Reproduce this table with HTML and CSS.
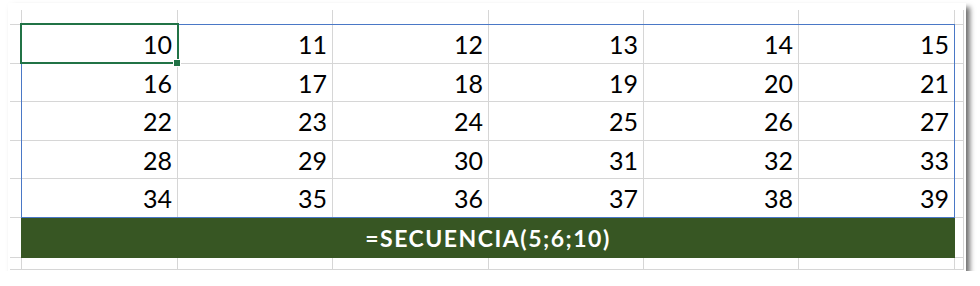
FILE: index.html
```html
<!DOCTYPE html>
<html lang="es">
<head>
<meta charset="utf-8">
<title>SECUENCIA</title>
<link rel="stylesheet" href="styles.css">
</head>
<body>
<div class="card">
  <div class="stack">
    <div class="sheet">
      <div class="c"></div><div class="c"></div><div class="c"></div><div class="c"></div><div class="c"></div><div class="c"></div><div class="c"></div><div class="c"></div>

      <div class="c"></div><div class="c n">10</div><div class="c n">11</div><div class="c n">12</div><div class="c n">13</div><div class="c n">14</div><div class="c n">15</div><div class="c"></div>
      <div class="c"></div><div class="c n">16</div><div class="c n">17</div><div class="c n">18</div><div class="c n">19</div><div class="c n">20</div><div class="c n">21</div><div class="c"></div>
      <div class="c"></div><div class="c n">22</div><div class="c n">23</div><div class="c n">24</div><div class="c n">25</div><div class="c n">26</div><div class="c n">27</div><div class="c"></div>
      <div class="c"></div><div class="c n">28</div><div class="c n">29</div><div class="c n">30</div><div class="c n">31</div><div class="c n">32</div><div class="c n">33</div><div class="c"></div>
      <div class="c"></div><div class="c n">34</div><div class="c n">35</div><div class="c n">36</div><div class="c n">37</div><div class="c n">38</div><div class="c n">39</div><div class="c"></div>

      <div class="c"></div><div class="formula">=SECUENCIA(5;6;10)</div><div class="c"></div>

      <div class="c"></div><div class="c"></div><div class="c"></div><div class="c"></div><div class="c"></div><div class="c"></div><div class="c"></div><div class="c"></div>
    </div>
    <div class="sheet overlay">
      <div class="range"></div>
      <div class="selection"><span class="handle"></span></div>
    </div>
  </div>
</div>
</body>
</html>
```
FILE: styles.css
```css
* { box-sizing: border-box; }

html, body {
  margin: 0;
  padding: 0;
  background: #ffffff;
}

.card {
  margin: 3px 0 0 8px;
  width: 958px;
  height: 268px;
  padding: 7px 0 0 2px;
  background: #ffffff;
  box-shadow: 4px 4px 5px rgba(0, 0, 0, 0.55);
}

.stack {
  display: grid;
}

.sheet {
  grid-area: 1 / 1;
  display: grid;
  grid-template-columns: 12px 156px 155px 156px 155px 155px 156px 9px;
  grid-template-rows: 15px 39px 38px 39px 38px 39px 40px 12px;
  font-family: Lato, "Liberation Sans", sans-serif;
}

.overlay {
  pointer-events: none;
}

.c {
  border-right: 1px solid #d6d6d6;
  border-bottom: 1px solid #d6d6d6;
}

.n {
  text-align: right;
  padding-right: 5px;
  font-size: 25px;
  line-height: 38px;
  color: #000000;
}

.formula {
  grid-column: 2 / 8;
  grid-row: 7;
  margin-left: -1px;
  background: #375623;
  color: #ffffff;
  font-weight: 700;
  font-size: 23px;
  letter-spacing: 1.5px;
  text-align: center;
  line-height: 40px;
}

.range {
  grid-column: 2 / 8;
  grid-row: 2 / 7;
  margin: -1px 0 0 -1px;
  border: 1px solid #4a78c6;
}

.selection {
  grid-column: 2 / 3;
  grid-row: 2 / 3;
  margin: -2px -1px 0 -2px;
  border: 2px solid #217346;
  position: relative;
}

.handle {
  position: absolute;
  right: -4px;
  bottom: -5px;
  width: 8px;
  height: 8px;
  background: #217346;
  border: 1px solid #ffffff;
}
```
